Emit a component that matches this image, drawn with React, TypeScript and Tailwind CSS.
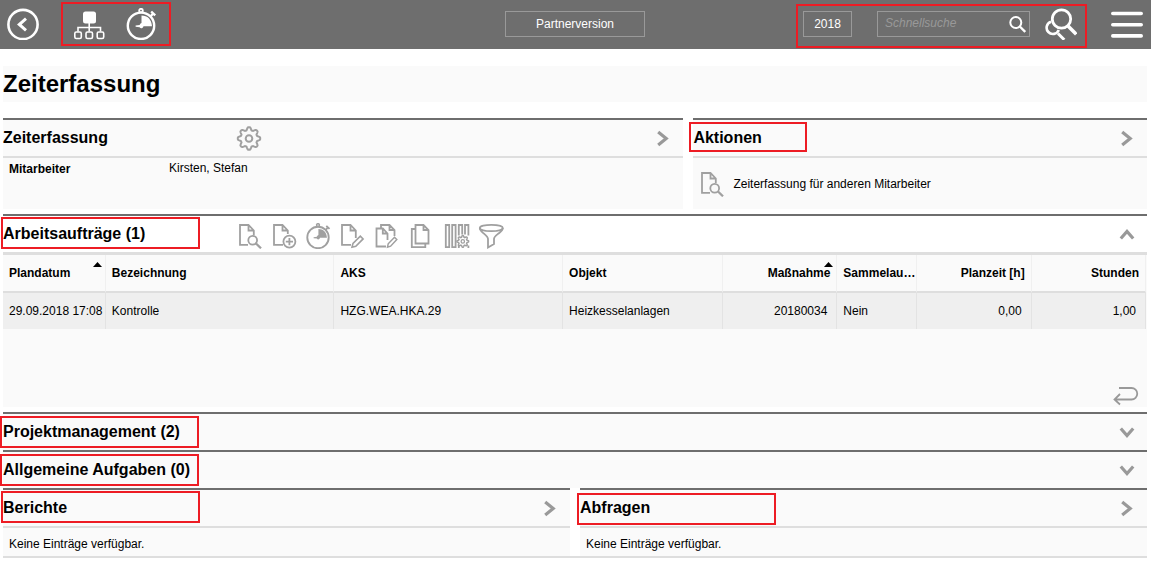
import { useState, type ReactNode } from 'react'
import clsx from 'clsx'

const columns = [
  { key: 'date', label: 'Plandatum', width: 'w-[9%]', sorted: true },
  { key: 'name', label: 'Bezeichnung', width: 'w-[20%]' },
  { key: 'aks', label: 'AKS', width: 'w-[20%]' },
  { key: 'object', label: 'Objekt', width: 'w-[14%]' },
  { key: 'measure', label: 'Maßnahme', width: 'w-[10%]', sorted: true, numeric: true },
  { key: 'collective', label: 'Sammelau…', width: 'w-[7%]' },
  { key: 'planned', label: 'Planzeit [h]', width: 'w-[10%]', numeric: true },
  { key: 'hours', label: 'Stunden', width: 'w-[10%]', numeric: true },
]

const orders: Record<string, string>[] = [
  {
    date: '29.09.2018 17:08',
    name: 'Kontrolle',
    aks: 'HZG.WEA.HKA.29',
    object: 'Heizkesselanlagen',
    measure: '20180034',
    collective: 'Nein',
    planned: '0,00',
    hours: '1,00',
  },
]

// outline of a cog wheel with soft, rounded teeth
function cogPath(cx: number, cy: number, radius: number, depth: number, teeth = 8) {
  const points: string[] = []
  for (let i = 0; i < 128; i++) {
    const a = (i / 128) * Math.PI * 2
    const wave = Math.max(-1, Math.min(1, Math.cos(a * teeth) * 1.3))
    const r = radius + wave * depth
    points.push(`${(cx + r * Math.sin(a)).toFixed(2)} ${(cy - r * Math.cos(a)).toFixed(2)}`)
  }
  return `M${points.join('L')}Z`
}

function ToolIcon({ children }: { children: ReactNode }) {
  return (
    <svg
      viewBox="0 0 26 26"
      className="block size-[26px] text-[#a0a0a0]"
      fill="none"
      stroke="currentColor"
      strokeWidth="1.8"
      aria-hidden="true"
    >
      {children}
    </svg>
  )
}

function SearchDocIcon() {
  return (
    <ToolIcon>
      <path d="M11 21.8H3V2h8.5l5.300 5.500V12M11.500 2v5.500h5" />
      <circle cx="15.700" cy="17.300" r="4.400" />
      <path d="M19 20.500l5 4.800" strokeWidth="2.300" />
    </ToolIcon>
  )
}

function AddDocIcon() {
  return (
    <ToolIcon>
      <path d="M12 21.8H3V2h8.5l5.3 5.5V11M11.5 2v5.5h5" />
      <circle cx="18.4" cy="18.6" r="6" />
      <path d="M18.4 15v7.2M14.8 18.6H22" />
    </ToolIcon>
  )
}

function EditDocIcon() {
  return (
    <ToolIcon>
      <path d="M12 21.8H3V2h8.5l5.3 5.5V15M11.5 2v5.5h5" />
      <path d="M13 24.2l1-3.8 7.3-7.3 2.8 2.8-7.3 7.3z" strokeWidth="1.6" />
    </ToolIcon>
  )
}

function EditDocsIcon() {
  return (
    <ToolIcon>
      <path d="M13 23.5H3.5V5.5h6.3l4.7 5V17M9.8 5.5v5h4.7" />
      <path d="M8 5.5V2h8.5l5 5v6M16.5 2v5h5" />
      <path d="M14.5 24.2l.7-3.4 6.3-6.6 2.3 2.3-6.2 6.7z" strokeWidth="1.5" />
    </ToolIcon>
  )
}

function CopyIcon() {
  return (
    <ToolIcon>
      <path d="M8.5 20.5V2h8l5 5v13.5zM16.5 2v5h5" />
      <path d="M8.5 6H4.8v18.2h13.5v-3.7" />
    </ToolIcon>
  )
}

function ColumnsIcon() {
  return (
    <ToolIcon>
      <path d="M1.8 2h3.4v22.2H1.800zM8.2 2h3.4v22.2H8.200z" />
      <path d="M14.8 12.500V2h3.400v9.500M21 11.500V2h3.400v10.500M14.800 22.500v2.500M24.400 22.500v2.500" />
      <path d={cogPath(18.8, 18.4, 5, 0.8)} strokeWidth="1.5" />
      <circle cx="18.8" cy="18.4" r="1.7" strokeWidth="1.3" />
    </ToolIcon>
  )
}

function FunnelIcon() {
  return (
    <ToolIcon>
      <ellipse cx="13.3" cy="5" rx="11.5" ry="3.2" />
      <path d="M1.8 5c0 2.5 1.5 3.500 4 5.500 2.500 2 4.200 3.300 4.200 5.500v8.500l6-3.500v-5c0-2.200 2-3.500 4.500-5.500s4.300-3 4.300-5.500" />
    </ToolIcon>
  )
}

function GearIcon() {
  return (
    <ToolIcon>
      <path d={cogPath(13, 13.5, 9.8, 1.4)} strokeWidth="2" />
      <circle cx="13" cy="13.5" r="3.3" strokeWidth="2" />
    </ToolIcon>
  )
}

function StopwatchIcon({ className, thick }: { className: string; thick?: boolean }) {
  return (
    <svg viewBox="0 0 32 32" className={className} fill="none" stroke="currentColor" strokeWidth={thick ? 2.4 : 2.3} aria-hidden="true">
      <circle cx="16" cy="17.8" r="13.2" />
      <circle cx="16" cy="2.6" r="1.8" strokeWidth="1.8" />
      <path d="M25.5 8.5l3-3.5M26.2 3.5l4 3.8" />
      <path d="M16.5 7.5c6 0 10.2 4 10.5 10.8h-8.500c-.8 2.400-2.900 2.600-3.900.9l-4-.4v-1.400l4-.5c.6-1.300 1.300-1.900 1.900-2z" fill="currentColor" stroke="none" />
    </svg>
  )
}

function ChevronIcon({ direction }: { direction: 'right' | 'up' | 'down' }) {
  return (
    <svg viewBox="0 0 22 22" className="block size-[22px] text-[#999]" fill="none" stroke="currentColor" strokeWidth="3.2" aria-hidden="true">
      {direction === 'right' && <path d="M6.2 5l8 6.5-8 6.5" />}
      {direction === 'up' && <path d="M4.8 15.5L11 8.5l6.2 7" />}
      {direction === 'down' && <path d="M4.8 7.5l6.2 7 6.2-7" />}
    </svg>
  )
}

// red frame that marks a part of the screen
function Marker({ className }: { className: string }) {
  return <span aria-hidden="true" className={clsx('pointer-events-none absolute border-2 border-[#ed1c24]', className)} />
}

interface PanelHeaderProps {
  title: string
  direction: 'right' | 'up' | 'down'
  marker?: string
  tools?: ReactNode
  onToggle?: () => void
}

function PanelHeader({ title, direction, marker, tools, onToggle }: PanelHeaderProps) {
  return (
    <div className="relative flex h-9 items-center pr-[9px]">
      <h2 className="min-w-[233px] text-base font-bold">{title}</h2>
      {tools}
      <button type="button" onClick={onToggle} aria-label={`${title} öffnen`} className="ml-auto">
        <ChevronIcon direction={direction} />
      </button>
      {marker && <Marker className={marker} />}
    </div>
  )
}

function ToolButton({ label, children }: { label: string; children: ReactNode }) {
  return (
    <button type="button" aria-label={label} title={label}>
      {children}
    </button>
  )
}

function TopBar() {
  return (
    <header className="grid h-[49px] grid-cols-[1fr_auto_1fr] items-center bg-[#6e6e6e] pr-px pb-px text-white">
      <div className="flex items-center gap-[22px] pl-[7px]">
        <button type="button" aria-label="Zurück">
          <svg viewBox="0 0 32 32" className="block size-8" fill="none" stroke="currentColor" strokeWidth="2.6" aria-hidden="true">
            <circle cx="16" cy="16.5" r="14.6" />
            <path d="M19 10.7l-6.7 5.8 6.7 5.8" strokeWidth="3" />
          </svg>
        </button>
        <div className="relative flex h-11 w-[110px] items-center gap-5 px-3">
          <button type="button" aria-label="Struktur">
            <svg viewBox="0 0 32 32" className="block size-8" fill="none" stroke="currentColor" strokeWidth="1.6" aria-hidden="true">
              <rect x="10" y="3.5" width="13" height="12" rx="2.5" fill="currentColor" stroke="none" />
              <path d="M16.2 15v8.500M5 23.500v-4h22.500v4" />
              <rect x="1.800" y="24" width="6.500" height="6.500" rx="1.500" />
              <rect x="13" y="24" width="6.500" height="6.500" rx="1.500" />
              <rect x="24.200" y="24" width="6.500" height="6.500" rx="1.500" />
            </svg>
          </button>
          <button type="button" aria-label="Zeiterfassung starten">
            <StopwatchIcon className="block size-8" thick />
          </button>
          <Marker className="inset-0" />
        </div>
      </div>

      <button type="button" className="h-[26px] w-[140px] border border-[#999] text-xs">
        Partnerversion
      </button>

      <div className="flex items-center justify-end gap-6 pr-[7px]">
        <div className="relative flex h-11 items-center pr-2.5 pl-[7px]">
          <button type="button" className="h-[26px] w-[49px] border border-[#999] text-xs">
            2018
          </button>
          <div className="relative ml-[25px]">
            <input
              type="text"
              aria-label="Schnellsuche"
              placeholder="Schnellsuche"
              className="block h-[26px] w-[153px] border border-[#999] bg-transparent pr-7 pb-[3px] pl-[7px] text-xs outline-none placeholder:text-[#999] placeholder:italic"
            />
            <button type="button" aria-label="Suchen" className="absolute top-[5px] right-1">
              <svg viewBox="0 0 17 17" className="block size-[17px]" fill="none" stroke="currentColor" strokeWidth="2" aria-hidden="true">
                <circle cx="6.8" cy="6.500" r="5.500" />
                <path d="M10.800 10.500l5.400 5.500" strokeWidth="2.400" />
              </svg>
            </button>
          </div>
          <button type="button" aria-label="Erweiterte Suche" className="ml-[15px]">
            <svg viewBox="0 0 32 32" className="block size-8" fill="none" stroke="currentColor" strokeWidth="2.6" aria-hidden="true">
              <circle cx="16.500" cy="11" r="9.200" strokeWidth="2.800" />
              <path d="M23 18l8.300 8.300" strokeWidth="3.600" />
              <path d="M6 13.700a6.300 6.300 0 1 0 7.800 8.300" />
              <path d="M13 25.500l6.300 6.200" strokeWidth="3" />
            </svg>
          </button>
          <Marker className="inset-x-0 top-0.5 -bottom-0.5" />
        </div>
        <button type="button" aria-label="Menü">
          <svg viewBox="0 0 32 32" className="block size-8" fill="none" stroke="currentColor" strokeWidth="3.6" strokeLinecap="round" aria-hidden="true">
            <path d="M1.8 5.500h28.400M1.800 16.700h28.400M1.800 27.900h28.400" />
          </svg>
        </button>
      </div>
    </header>
  )
}

function OrderTable() {
  return (
    <div className="pr-px">
      <table className="w-full table-fixed border-separate border-spacing-0 text-xs">
        <thead>
          <tr className="h-[38px]">
            {columns.map((column) => (
              <th
                key={column.key}
                scope="col"
                className={clsx(
                  'relative border-r border-b-2 border-r-[#f0f0f0] border-b-[#dedede] p-0 pl-1.5 whitespace-nowrap',
                  column.width,
                  column.numeric ? 'pr-1.5 text-right' : 'text-left',
                )}
              >
                {column.label}
                {column.sorted && (
                  <svg viewBox="0 0 9 5" className="absolute top-[7px] right-[3px] h-[5px] w-[9px]" aria-hidden="true">
                    <path d="M0 5L4.5 0 9 5z" />
                  </svg>
                )}
              </th>
            ))}
          </tr>
        </thead>
        <tbody>
          {orders.map((order) => (
            <tr key={order.date} className="h-9 bg-[#efefef]">
              {columns.map((column) => (
                <td
                  key={column.key}
                  className={clsx(
                    'border-r border-[#e3e3e3] p-0 pl-1.5 whitespace-nowrap',
                    column.numeric ? 'pr-[9px] text-right' : 'text-left',
                  )}
                >
                  {order[column.key]}
                </td>
              ))}
            </tr>
          ))}
        </tbody>
      </table>
    </div>
  )
}

function OrderTools() {
  return (
    <div className="flex gap-[11px] pt-1 pl-px">
      <div className="flex gap-2">
        <ToolButton label="Anzeigen"><SearchDocIcon /></ToolButton>
        <ToolButton label="Neu"><AddDocIcon /></ToolButton>
        <ToolButton label="Zeit erfassen"><StopwatchIcon className="block size-[26px] text-[#a0a0a0]" /></ToolButton>
        <ToolButton label="Bearbeiten"><EditDocIcon /></ToolButton>
        <ToolButton label="Mehrere bearbeiten"><EditDocsIcon /></ToolButton>
        <ToolButton label="Kopieren"><CopyIcon /></ToolButton>
      </div>
      <div className="flex gap-2">
        <ToolButton label="Spalten"><ColumnsIcon /></ToolButton>
        <ToolButton label="Filter"><FunnelIcon /></ToolButton>
      </div>
    </div>
  )
}

function App() {
  const [ordersOpen, setOrdersOpen] = useState(true)

  return (
    <div className="min-h-screen bg-white font-['Liberation_Sans',Arial,sans-serif] text-black">
      <TopBar />

      <main className="pt-[17px] pr-1 pl-[3px]">
        <h1 className="bg-[#fafafa] text-2xl leading-9 font-bold">Zeiterfassung</h1>

        <div className="mt-4 grid grid-cols-[3fr_2fr] gap-2.5">
          <section className="border-t-2 border-[#6e6e6e] bg-[#fafafa]">
            <PanelHeader
              title="Zeiterfassung"
              direction="right"
              tools={<ToolButton label="Einstellungen"><GearIcon /></ToolButton>}
            />
            <dl className="flex border-t-2 border-[#dedede] px-1.5 pt-0.5 text-xs">
              <dt className="w-40 pt-px font-bold">Mitarbeiter</dt>
              <dd>Kirsten, Stefan</dd>
            </dl>
          </section>

          <section className="border-t-2 border-[#6e6e6e] bg-[#fafafa]">
            <PanelHeader title="Aktionen" direction="right" marker="top-0.5 -left-1 h-[30px] w-[118px]" />
            <div className="flex h-[53px] items-center border-t-2 border-[#dedede] pl-1.5">
              <button type="button" className="flex items-center gap-2 text-xs">
                <SearchDocIcon />
                Zeiterfassung für anderen Mitarbeiter
              </button>
            </div>
          </section>
        </div>

        <section className="mt-[5px] border-t-2 border-[#6e6e6e]">
          <PanelHeader
            title="Arbeitsaufträge (1)"
            direction={ordersOpen ? 'up' : 'down'}
            marker="top-px -left-0.5 h-8 w-[199px]"
            tools={<OrderTools />}
            onToggle={() => setOrdersOpen(!ordersOpen)}
          />
          {ordersOpen && (
            <div className="border-t-3 border-[#dedede] bg-[#fafafa]">
              <OrderTable />
              <div className="flex h-[78px] items-end justify-end pr-2">
                <button type="button" aria-label="Umbruch">
                  <svg viewBox="0 0 26 22" className="block h-[22px] w-[26px] text-[#999]" fill="none" stroke="currentColor" strokeWidth="1.8" aria-hidden="true">
                    <path d="M6 3h12.500a5.500 5.500 0 0 1 0 11.500H1.500M7 9l-5.500 5.500L7 19.500" />
                  </svg>
                </button>
              </div>
            </div>
          )}
        </section>

        <section className="mt-[5px] border-t-2 border-[#6e6e6e] bg-[#fafafa]">
          <PanelHeader title="Projektmanagement (2)" direction="down" marker="top-0.5 -left-[3px] h-8 w-[199px]" />
        </section>

        <section className="border-t-2 border-[#6e6e6e] bg-[#fafafa]">
          <PanelHeader title="Allgemeine Aufgaben (0)" direction="down" marker="top-0.5 -left-[3px] h-8 w-[199px]" />
        </section>

        <div className="grid grid-cols-2 gap-2.5 border-b-2 border-[#dedede]">
          <section className="border-t-2 border-[#6e6e6e] bg-[#fafafa]">
            <PanelHeader title="Berichte" direction="right" marker="top-px -left-0.5 h-8 w-[199px]" />
            <p className="border-t-2 border-[#dedede] px-1.5 pt-2 pb-1 text-xs">Keine Einträge verfügbar.</p>
          </section>
          <section className="border-t-2 border-[#6e6e6e] bg-[#fafafa]">
            <PanelHeader title="Abfragen" direction="right" marker="top-[3px] -left-[3px] h-8 w-[199px]" />
            <p className="border-t-2 border-[#dedede] px-1.5 pt-2 pb-1 text-xs">Keine Einträge verfügbar.</p>
          </section>
        </div>
      </main>
    </div>
  )
}

export default App
